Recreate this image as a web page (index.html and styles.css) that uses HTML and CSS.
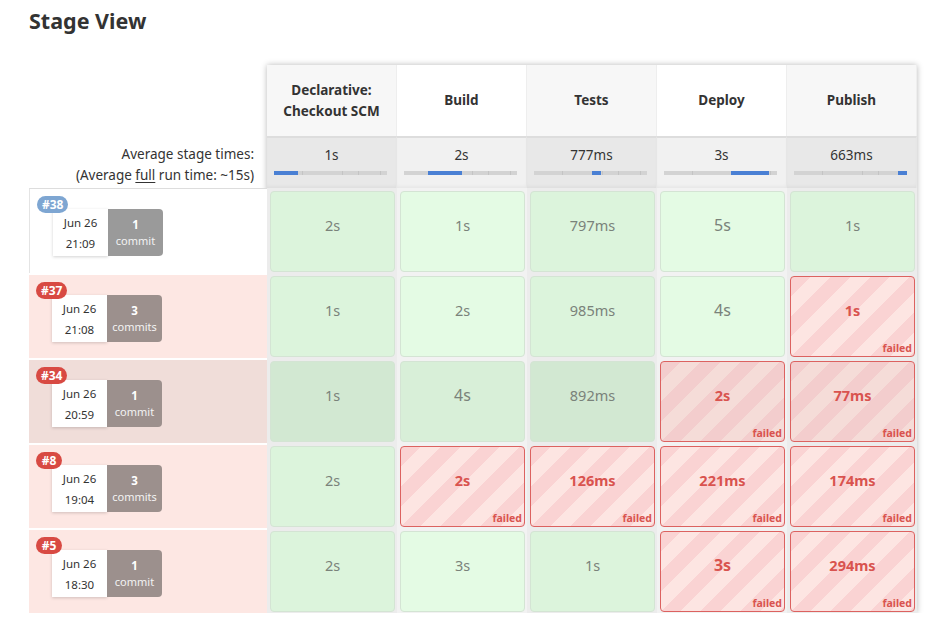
FILE: index.html
```html
<!DOCTYPE html>
<html>
<head>
<meta charset="utf-8">
<link rel="stylesheet" href="styles.css">
</head>
<body>
<div class="page">
  <h2 class="title">Stage View</h2>
  <div class="view">
    <div class="builds">
      <div class="bh-spacer"></div>
      <div class="avg-label">
        <div>Average stage times:</div>
        <div>(Average <u>full</u> run time: ~15s)</div>
      </div>
      <div class="brow ok">
        <span class="badge blue">#38</span>
        <div class="card"><div class="date"><span>Jun 26</span><span>21:09</span></div><div class="commits grey"><b>1</b><span>commit</span></div></div>
      </div>
      <div class="brow fail">
        <span class="badge red">#37</span>
        <div class="card"><div class="date"><span>Jun 26</span><span>21:08</span></div><div class="commits"><b>3</b><span>commits</span></div></div>
      </div>
      <div class="brow fail hover">
        <span class="badge red">#34</span>
        <div class="card"><div class="date"><span>Jun 26</span><span>20:59</span></div><div class="commits"><b>1</b><span>commit</span></div></div>
      </div>
      <div class="brow fail">
        <span class="badge red">#8</span>
        <div class="card"><div class="date"><span>Jun 26</span><span>19:04</span></div><div class="commits"><b>3</b><span>commits</span></div></div>
      </div>
      <div class="brow fail">
        <span class="badge red">#5</span>
        <div class="card"><div class="date"><span>Jun 26</span><span>18:30</span></div><div class="commits"><b>1</b><span>commit</span></div></div>
      </div>
    </div>
    <div class="stages">
      <div class="sh odd">Declarative:<br>Checkout SCM</div>
      <div class="sh">Build</div>
      <div class="sh odd">Tests</div>
      <div class="sh">Deploy</div>
      <div class="sh odd">Publish</div>

      <div class="avg odd"><span>1s</span><div class="bar"><i style="left:0;width:24px"></i></div></div>
      <div class="avg"><span>2s</span><div class="bar"><i style="left:24px;width:34px"></i></div></div>
      <div class="avg odd"><span>777ms</span><div class="bar"><i style="left:58px;width:9px"></i></div></div>
      <div class="avg"><span>3s</span><div class="bar"><i style="left:67px;width:38px"></i></div></div>
      <div class="avg odd"><span>663ms</span><div class="bar"><i style="left:104px;width:9px"></i></div></div>

      <div class="cw odd"><div class="cell ok">2s</div></div>
      <div class="cw"><div class="cell ok">1s</div></div>
      <div class="cw odd"><div class="cell ok">797ms</div></div>
      <div class="cw"><div class="cell ok big">5s</div></div>
      <div class="cw odd"><div class="cell ok">1s</div></div>

      <div class="cw odd"><div class="cell ok">1s</div></div>
      <div class="cw"><div class="cell ok">2s</div></div>
      <div class="cw odd"><div class="cell ok">985ms</div></div>
      <div class="cw"><div class="cell ok big">4s</div></div>
      <div class="cw odd"><div class="cell bad">1s<em>failed</em></div></div>

      <div class="cw odd hov"><div class="cell ok">1s</div></div>
      <div class="cw hov"><div class="cell ok big">4s</div></div>
      <div class="cw odd hov"><div class="cell ok">892ms</div></div>
      <div class="cw hov"><div class="cell bad">2s<em>failed</em></div></div>
      <div class="cw odd hov"><div class="cell bad">77ms<em>failed</em></div></div>

      <div class="cw odd"><div class="cell ok">2s</div></div>
      <div class="cw"><div class="cell bad">2s<em>failed</em></div></div>
      <div class="cw odd"><div class="cell bad">126ms<em>failed</em></div></div>
      <div class="cw"><div class="cell bad">221ms<em>failed</em></div></div>
      <div class="cw odd"><div class="cell bad">174ms<em>failed</em></div></div>

      <div class="cw odd"><div class="cell ok">2s</div></div>
      <div class="cw"><div class="cell ok">3s</div></div>
      <div class="cw odd"><div class="cell ok">1s</div></div>
      <div class="cw"><div class="cell bad big">3s<em>failed</em></div></div>
      <div class="cw odd"><div class="cell bad">294ms<em>failed</em></div></div>
    </div>
  </div>
</div>
</body>
</html>
```
FILE: styles.css
```css
* { box-sizing: border-box; }
body {
  margin: 0;
  background: #fff;
  font-family: "Noto Sans", "Open Sans", sans-serif;
  color: #333;
}
.page { padding: 0 0 0 29px; }
.title {
  margin: 0;
  padding-top: 7px;
  height: 65px;
  font-size: 21.5px;
  font-weight: 700;
  color: #333;
  line-height: 27px;
}
.view { display: flex; align-items: flex-start; }
.builds { width: 238px; }
.bh-spacer { height: 71px; }
.avg-label {
  height: 52px;
  text-align: right;
  padding: 8px 13px 0 0;
  font-size: 13.5px;
  line-height: 21px;
  color: #333;
}
.avg-label u { text-decoration-thickness: 1px; text-underline-offset: 2px; }
.brow {
  position: relative;
  height: 85px;
  padding: 20px 0 0 23px;
  border-top: 1px solid #e4e4e4;
}
.brow.ok { background: #fff; border-left: 1px solid #e4e4e4; border-top: 1px solid #ddd; }
.brow.fail { background: #fde7e3; border-top: 2px solid #fff; }
.brow.fail.hover { background: #f0ddd9; }
.badge {
  position: absolute;
  left: 7px;
  top: 7px;
  min-width: 26px;
  padding: 0 5px;
  height: 17px;
  border-radius: 9px;
  font-size: 12px;
  font-weight: 700;
  line-height: 17px;
  color: #fff;
  text-align: center;
  z-index: 1;
}
.badge.blue { background: #7ea6d2; }
.badge.red { background: #d84a43; }
.card { display: flex; width: 110px; height: 47px; }
.date {
  width: 55px;
  background: #fff;
  box-shadow: 0 1px 3px rgba(0,0,0,0.18);
  display: flex;
  flex-direction: column;
  align-items: center;
  justify-content: center;
  gap: 2px;
  font-size: 11.5px;
  line-height: 19px;
  color: #333;
}
.commits {
  width: 55px;
  background: #9c908d;
  border-radius: 0 4px 4px 0;
  color: #fff;
  display: flex;
  flex-direction: column;
  align-items: center;
  justify-content: center;
  font-size: 11px;
  line-height: 16px;
}
.commits.grey { background: #9a9a9a; }
.commits b { font-weight: 700; font-size: 11.5px; }
.commits span { color: #f3f3f3; }

.stages {
  display: grid;
  grid-template-columns: repeat(5, 130px);
  grid-template-rows: 71px 52px repeat(5, 85px);
  box-shadow: 0 0 6px rgba(0,0,0,0.28);
  background: #f0f0f0;
}
.sh {
  background: #fff;
  display: flex;
  align-items: center;
  justify-content: center;
  text-align: center;
  font-size: 13.5px;
  font-weight: 700;
  line-height: 21px;
  color: #333;
  border-right: 1px solid #eee;
}
.sh.odd { background: #f7f7f7; }
.avg {
  background: #f1f1f1;
  border-top: 2px solid #ddd;
  text-align: center;
  padding-top: 8px;
  font-size: 13.5px;
  line-height: 18px;
  color: #333;
  border-right: 1px solid #e6e6e6;
  box-shadow: inset 0 -3px 4px -2px rgba(0,0,0,0.06);
}
.avg.odd { background: #e8e8e8; }
.bar {
  position: relative;
  margin: 7px 0 0 7px;
  width: 113px;
  height: 4px;
  background: #d3d3d3;
  background-image:
    linear-gradient(90deg, transparent 25%, #c4c4c4 25%, #c4c4c4 26%, transparent 26%,
      transparent 60%, #c4c4c4 60%, #c4c4c4 61%, transparent 61%,
      transparent 74%, #c4c4c4 74%, #c4c4c4 75%, transparent 75%,
      transparent 94%, #c4c4c4 94%, #c4c4c4 95%, transparent 95%);
}
.bar i {
  position: absolute;
  top: 0;
  height: 4px;
  background: #4a80d4;
}
.cw {
  background: #f2f2f2;
  padding: 3px 2px 1px 3px;
}
.cw.odd { background: #ececec; }
.cell {
  position: relative;
  height: 100%;
  border-radius: 4px;
  border: 1px solid #d4e4d4;
  text-align: center;
  padding-top: 23px;
  font-size: 14.5px;
  line-height: 20px;
}
.cell.ok { background: #e4fbe4; color: #7a827a; }
.cw.odd .cell.ok { background: #dcf4dc; }
.cw.hov .cell.ok { background: #d8efd8; }
.cw.odd.hov .cell.ok { background: #d2e8d2; }
.cell.big { font-size: 16px; }
.cell.bad {
  color: #d9534f;
  font-weight: 700;
  border: 1px solid #dc6260;
  background: repeating-linear-gradient(135deg, #fad3d3 0 14px, #fde5e2 14px 28px);
}
.cw.hov .cell.bad {
  background: repeating-linear-gradient(135deg, #f3cdcd 0 14px, #f5dcd8 14px 28px);
}
.cell em {
  position: absolute;
  right: 2px;
  bottom: 1px;
  font-style: normal;
  font-size: 10.5px;
  font-weight: 700;
  line-height: 14px;
  color: #d9534f;
}
```
